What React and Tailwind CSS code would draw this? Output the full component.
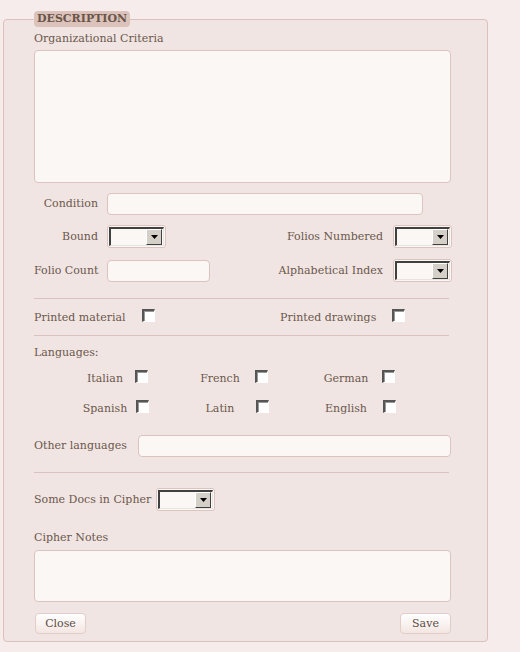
import React from 'react';

const font = { fontFamily: '"DejaVu Serif", "Liberation Serif", serif' };

const Checkbox = ({ className = '' }) => (
  <span className={`flex w-[13px] h-[13px] shrink-0 border-t-2 border-l-2 border-b border-r border-t-[#555] border-l-[#555] border-b-white border-r-white bg-white shadow-[inset_1px_1px_0_#999] ${className}`} />
);

const Select = ({ className = '' }) => (
  <div className={`h-[23px] w-[59px] shrink-0 rounded-[3px] border border-[#dcc3bd] bg-[#fbf7f4] p-[1px] ${className}`}>
    <div className="flex h-full w-full items-center justify-end border-t-2 border-l-2 border-b border-r border-t-[#404040] border-l-[#404040] border-b-[#e8e4e0] border-r-[#e8e4e0] bg-[#fbf7f4] pr-[1px]">
      <div className="flex h-[16px] w-[16px] items-center justify-center border border-t-white border-l-white border-b-[#404040] border-r-[#404040] bg-[#d4d0c8]">
        <svg width="7" height="4" viewBox="0 0 7 4"><path d="M0 0h7L3.5 4z" fill="#000" /></svg>
      </div>
    </div>
  </div>
);

const Input = ({ className = '' }) => (
  <div className={`h-[22px] shrink-0 rounded-[4px] border border-[#dcc3bd] bg-[#fbf7f4] ${className}`} />
);

const Hr = ({ className = '' }) => <div className={`h-px w-[415px] bg-[#d9c2bd] ${className}`} />;

const Button = ({ children }) => (
  <button className="h-[21px] w-[51px] rounded-[4px] border border-[#e2cdc8] bg-gradient-to-b from-white to-[#f3e6e2] text-[11px] leading-none text-[#5b4d45]">
    {children}
  </button>
);

export default function App() {
  const text = 'text-[11px] leading-[14px] text-[#6b584c] whitespace-nowrap';
  return (
    <div className="w-[520px] h-[652px] bg-[#f6ecec] pt-[11px]" style={font}>
      <fieldset className="ml-[3px] w-[485px] h-[631px] rounded-[4px] border border-[#dcc0bb] bg-[#f1e5e3] px-[30px]">
        <legend className="rounded-[4px] bg-[#dbc3bc] px-[3px] py-[1px] text-[11px] font-bold leading-[14px] text-[#6b5549]">
          DESCRIPTION
        </legend>

        <div className={`${text} mt-[5px]`}>Organizational Criteria</div>
        <div className="mt-[4px] h-[133px] w-[417px] rounded-[4px] border border-[#dcc3bd] bg-[#fbf7f4]" />

        <div className="mt-[10px] flex items-center">
          <div className={`${text} w-[64px] text-right`}>Condition</div>
          <Input className="ml-[9px] w-[316px]" />
        </div>

        <div className="mt-[10px] flex items-center">
          <div className={`${text} w-[64px] text-right`}>Bound</div>
          <Select className="ml-[9px]" />
          <div className={`${text} ml-auto`}>Folios Numbered</div>
          <Select className="ml-[10px] mr-[5px]" />
        </div>

        <div className="mt-[11px] flex items-center">
          <div className={`${text} w-[64px] text-right`}>Folio Count</div>
          <Input className="ml-[9px] w-[103px]" />
          <div className={`${text} ml-auto`}>Alphabetical Index</div>
          <Select className="ml-[10px] mr-[5px]" />
        </div>

        <Hr className="mt-[16px]" />

        <div className="mt-[10px] flex items-start">
          <div className="flex w-[246px] items-start">
            <div className={`${text} mt-[2px]`}>Printed material</div>
            <Checkbox className="ml-[16px]" />
          </div>
          <div className={`${text} mt-[2px]`}>Printed drawings</div>
          <Checkbox className="ml-[16px]" />
        </div>

        <Hr className="mt-[10px]" />

        <div className={`${text} mt-[10px]`}>Languages:</div>

        <div className="mt-[10px] flex items-start">
          <div className={`${text} ml-[42px] mt-[2px] w-[58px] text-center`}>Italian</div>
          <Checkbox className="ml-[1px]" />
          <div className={`${text} ml-[43px] mt-[2px] w-[58px] text-center`}>French</div>
          <Checkbox className="ml-[6px]" />
          <div className={`${text} ml-[49px] mt-[2px] w-[58px] text-center`}>German</div>
          <Checkbox className="ml-[7px]" />
        </div>

        <div className="mt-[14px] flex items-start">
          <div className={`${text} ml-[42px] mt-[2px] w-[58px] text-center`}>Spanish</div>
          <Checkbox className="ml-[2px]" />
          <div className={`${text} ml-[42px] mt-[2px] w-[58px] text-center`}>Latin</div>
          <Checkbox className="ml-[7px]" />
          <div className={`${text} ml-[48px] mt-[2px] w-[58px] text-center`}>English</div>
          <Checkbox className="ml-[8px]" />
        </div>

        <div className="mt-[19px] flex items-center">
          <div className={`${text} w-[104px]`}>Other languages</div>
          <Input className="w-[313px]" />
        </div>

        <Hr className="mt-[15px]" />

        <div className="mt-[15px] flex items-center">
          <div className={`${text} w-[122px]`}>Some Docs in Cipher</div>
          <Select />
        </div>

        <div className={`${text} mt-[20px]`}>Cipher Notes</div>
        <div className="mt-[5px] h-[52px] w-[417px] rounded-[4px] border border-[#dcc3bd] bg-[#fbf7f4]" />

        <div className="mt-[11px] flex w-[417px] justify-between pl-[1px]">
          <Button>Close</Button>
          <Button>Save</Button>
        </div>
      </fieldset>
    </div>
  );
}
